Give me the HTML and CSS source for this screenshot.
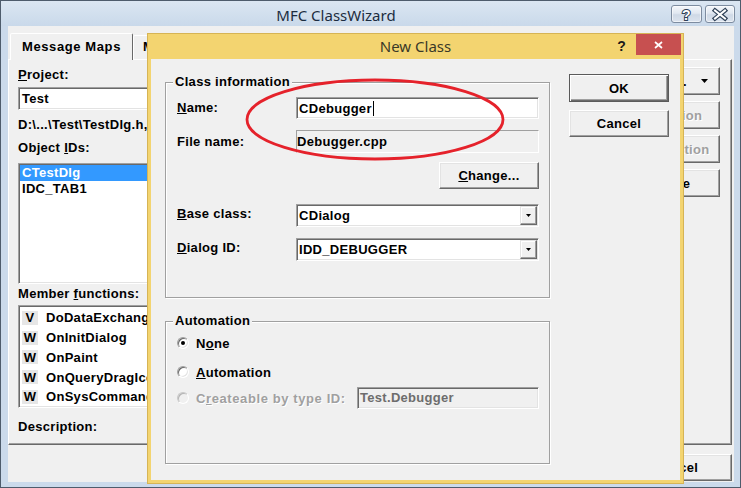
FILE: index.html
```html
<!DOCTYPE html>
<html>
<head>
<meta charset="utf-8">
<title>MFC ClassWizard</title>
<link rel="stylesheet" href="styles.css">
</head>
<body>
<div class="win">
  <div class="titlebar">
    <div class="title">MFC ClassWizard</div>
    <div class="tbtns">
      <div class="tbtn tbtn-help">
        <svg width="29" height="16" viewBox="0 0 29 16"><text x="14.5" y="13.5" text-anchor="middle" font-family="Liberation Sans, Arial, sans-serif" font-weight="700" font-size="14" fill="#ffffff" stroke="#2f4157" stroke-width="2" paint-order="stroke">?</text></svg>
      </div>
      <div class="tbtn tbtn-close">
        <svg width="28" height="16" viewBox="0 0 28 16"><path d="M9 4.5 L19 12.5 M19 4.5 L9 12.5" stroke="#2f4157" stroke-width="4.4" stroke-linecap="square" fill="none"/><path d="M9 4.5 L19 12.5 M19 4.5 L9 12.5" stroke="#ffffff" stroke-width="2" stroke-linecap="square" fill="none"/></svg>
      </div>
    </div>
  </div>
  <div class="client">
    <div class="tabs">
      <div class="tab active">Message Maps</div>
      <div class="tab">Member Variables</div>
      <div class="tab">Automation</div>
    </div>
    <div class="page">
      <div class="leftcol">
        <div class="lbl l-project"><u>P</u>roject:</div>
        <div class="sunk edit e-project">Test</div>
        <div class="lbl l-path">D:\...\Test\TestDlg.h, D:\...\Test\TestDlg.cpp</div>
        <div class="lbl l-ids">Object <u>I</u>Ds:</div>
        <div class="sunk list l-obj">
          <div class="item sel">CTestDlg</div>
          <div class="item">IDC_TAB1</div>
        </div>
        <div class="lbl l-mf">Member <u>f</u>unctions:</div>
        <div class="sunk list l-mem">
          <div class="mrow"><span class="mk">V</span>DoDataExchange</div>
          <div class="mrow"><span class="mk">W</span>OnInitDialog</div>
          <div class="mrow"><span class="mk">W</span>OnPaint</div>
          <div class="mrow"><span class="mk">W</span>OnQueryDragIcon</div>
          <div class="mrow"><span class="mk">W</span>OnSysCommand</div>
        </div>
        <div class="lbl l-desc">Description:</div>
      </div>
      <div class="rightcol">
        <div class="btn">Add Class...<svg class="arr" width="7" height="4" viewBox="0 0 7 4"><polygon points="0,0 7,0 3.5,4" fill="#000"/></svg></div>
        <div class="btn dis">Add Function</div>
        <div class="btn dis">Delete Function</div>
        <div class="btn">Edit Code</div>
      </div>
    </div>
    <div class="bottombar">
      <div class="btn">OK</div>
      <div class="btn">Cancel</div>
    </div>
  </div>
</div>

<div class="dlg">
  <div class="dtitle">
    <div class="dname">New Class</div>
    <div class="dctrls">
      <div class="dhelp">?</div>
      <div class="dclose"><svg width="9" height="8" viewBox="0 0 9 8"><path d="M1 1 L8 7 M8 1 L1 7" stroke="#ffffff" stroke-width="1.7" fill="none"/></svg></div>
    </div>
  </div>
  <div class="dclient">
    <div class="groups">
      <div class="group g-info">
        <div class="glabel">Class information</div>
        <div class="frow r-name">
          <div class="flbl"><u>N</u>ame:</div>
          <div class="sunk fld f-edit">CDebugger<span class="caret"></span></div>
        </div>
        <div class="frow r-file">
          <div class="flbl">File name:</div>
          <div class="static fld">Debugger.cpp</div>
        </div>
        <div class="frow r-change">
          <div class="btn b-change"><u>C</u>hange...</div>
        </div>
        <div class="frow r-base">
          <div class="flbl up"><u>B</u>ase class:</div>
          <div class="sunk fld combo"><span class="ctext">CDialog</span><span class="drop"><svg width="5" height="3" viewBox="0 0 5 3"><polygon points="0,0 5,0 2.5,3" fill="#000"/></svg></span></div>
        </div>
        <div class="frow r-did">
          <div class="flbl up"><u>D</u>ialog ID:</div>
          <div class="sunk fld combo"><span class="ctext">IDD_DEBUGGER</span><span class="drop"><svg width="5" height="3" viewBox="0 0 5 3"><polygon points="0,0 5,0 2.5,3" fill="#000"/></svg></span></div>
        </div>
      </div>
      <div class="group g-auto">
        <div class="glabel">Automation</div>
        <div class="rrow rr1"><span class="radio on"></span><span class="rlbl">N<u>o</u>ne</span></div>
        <div class="rrow rr2"><span class="radio"></span><span class="rlbl"><u>A</u>utomation</span></div>
        <div class="rrow rr3"><span class="radio dis"></span><span class="rlbl dis">C<u>r</u>eateable by type ID:</span><div class="sunk dedit">Test.Debugger</div></div>
      </div>
    </div>
    <div class="dbtns">
      <div class="btn def b-ok">OK</div>
      <div class="btn b-cancel">Cancel</div>
    </div>
  </div>
</div>

<svg class="ring" width="262" height="84" viewBox="0 0 262 84"><ellipse cx="130" cy="41.5" rx="128" ry="39.5" fill="none" stroke="#e5222b" stroke-width="2.8"/></svg>
</body>
</html>
```

FILE: styles.css
```css
html, body {
  margin: 0;
  padding: 0;
}
body {
  position: relative;
  width: 741px;
  height: 488px;
  overflow: hidden;
  font-family: "Liberation Sans", Arial, sans-serif;
  font-size: 13px;
  font-weight: 700;
  letter-spacing: 0.3px;
  color: #000;
  background: #cbdaeb;
}
u { text-decoration: underline; text-underline-offset: 1px; }

/* ---------- outer window ---------- */
.win {
  box-sizing: border-box;
  width: 741px;
  height: 488px;
  border: 1px solid #4e5c6c;
  background: #cbdaeb;
  display: flex;
  flex-direction: column;
}
.titlebar {
  height: 25px;
  flex: none;
  display: flex;
  align-items: flex-start;
  background: linear-gradient(#dbe6f2, #c9d9ea);
}
.title {
  flex: 1;
  text-align: center;
  font-family: "Noto Sans", "Open Sans", sans-serif;
  font-weight: 400;
  font-size: 15px;
  letter-spacing: 0;
  line-height: 20px;
  padding-top: 4px;
  color: #1c2c40;
}
.tbtns {
  display: flex;
  gap: 3px;
  margin: 4px 5px 0 0;
}
.tbtn {
  box-sizing: border-box;
  height: 18px;
  border: 1px solid #7d8ca0;
  border-radius: 3px;
  background: linear-gradient(#f4f7fb, #e1e8f1 45%, #cfd9e6 55%, #dbe3ee);
  box-shadow: inset 0 0 0 1px rgba(255,255,255,0.55);
  display: flex;
  align-items: center;
  justify-content: center;
}
.tbtn-help { width: 31px; }
.tbtn-close { width: 30px; }

.client {
  flex: 1;
  margin: 0 6px 5px 7px;
  background: #f0f0f0;
  padding-top: 7px;
  display: flex;
  flex-direction: column;
}
.tabs {
  flex: none;
  height: 26px;
  display: flex;
  align-items: flex-end;
  padding-left: 2px;
}
.tab {
  box-sizing: border-box;
  height: 24px;
  border: 1px solid;
  border-bottom: 0;
  border-color: #fff #696969 transparent #fff;
  border-radius: 2px 2px 0 0;
  background: #f0f0f0;
  padding: 0 9px;
  line-height: 22px;
  white-space: nowrap;
}
.tab.active {
  height: 27px;
  width: 123px;
  margin-bottom: -1px;
  padding: 0;
  text-align: center;
  line-height: 25px;
  letter-spacing: 0.6px;
  position: relative;
  z-index: 1;
}
.page {
  flex: none;
  box-sizing: border-box;
  height: 386px;
  margin-right: 2px;
  border: 1px solid;
  border-color: #fff #696969 #696969 #fff;
  box-shadow: inset -1px -1px 0 #a0a0a0;
  padding: 7px 11px 0 9px;
  display: flex;
  justify-content: space-between;
}
.leftcol {
  width: 420px;
  display: flex;
  flex-direction: column;
}
.lbl {
  height: 16px;
  line-height: 16px;
  white-space: nowrap;
}
.sunk {
  box-sizing: border-box;
  border: 1px solid;
  border-color: #a0a0a0 #fff #fff #a0a0a0;
  box-shadow: inset 1px 1px 0 #696969, inset -1px -1px 0 #e3e3e3;
  padding: 1px;
  background: #fff;
}
.e-project {
  margin-top: 4px;
  height: 23px;
  line-height: 19px;
  padding-left: 3px;
}
.l-path { margin-top: 7px; }
.l-ids { margin-top: 7px; }
.l-obj {
  margin-top: 7px;
  height: 121px;
}
.item {
  height: 16px;
  line-height: 16px;
  padding-left: 2px;
  white-space: nowrap;
}
.item.sel {
  background: #3399ff;
  color: #fff;
}
.l-mf { margin-top: 2px; }
.l-mem {
  margin-top: 3px;
  height: 103px;
  padding-top: 2px;
  padding-left: 3px;
}
.mrow {
  height: 19.75px;
  display: flex;
  align-items: center;
  white-space: nowrap;
}
.mk {
  width: 16px;
  height: 14px;
  background: #e6e6e6;
  display: inline-flex;
  align-items: center;
  justify-content: center;
  margin-right: 8px;
  flex: none;
}
.l-desc { margin-top: 11px; }

.rightcol {
  width: 123px;
  display: flex;
  flex-direction: column;
  gap: 6px;
}
.rightcol .btn { height: 28px; }
.arr { margin-left: 14px; }

.btn {
  box-sizing: border-box;
  display: flex;
  align-items: center;
  justify-content: center;
  background: #f0f0f0;
  border: 1px solid;
  border-color: #fff #696969 #696969 #fff;
  box-shadow: inset -1px -1px 0 #a0a0a0, inset 1px 1px 0 #e3e3e3;
  white-space: nowrap;
}
.btn.dis, .dis {
  color: #a0a0a0;
  text-shadow: 1px 1px 0 #fff;
}
.btn.def {
  border: 1px solid #5a5a5a;
  box-shadow: inset 1px 1px 0 #fff, inset -1px -1px 0 #696969, inset -2px -2px 0 #a0a0a0;
}
.bottombar {
  display: flex;
  justify-content: flex-end;
  gap: 8px;
  margin: 9px 2px 0 0;
}
.bottombar .btn {
  width: 112px;
  height: 27px;
}

/* ---------- New Class dialog ---------- */
.dlg {
  position: absolute;
  left: 147px;
  top: 33px;
  width: 537px;
  height: 451px;
  box-sizing: border-box;
  border: 1px solid #d6b455;
  background: #f3d470;
  padding: 0 3px 3px;
  display: flex;
  flex-direction: column;
}
.dtitle {
  height: 25px;
  flex: none;
  margin: 0 -3px;
  display: grid;
  grid-template-columns: 1fr auto 1fr;
  align-items: start;
}
.dname {
  grid-column: 2;
  font-family: "Noto Sans", "Open Sans", sans-serif;
  font-weight: 400;
  font-size: 15px;
  letter-spacing: 0;
  line-height: 25px;
  color: #3a3928;
}
.dctrls {
  grid-column: 3;
  justify-self: end;
  display: flex;
  align-items: flex-start;
}
.dhelp {
  font-size: 14px;
  line-height: 14px;
  margin: 5px 10px 0 0;
  color: #1a1a1a;
}
.dclose {
  width: 45px;
  height: 21px;
  background: #c75050;
  display: flex;
  align-items: center;
  justify-content: center;
  margin-right: 2px;
}
.dclient {
  flex: 1;
  background: #f0f0f0;
  display: flex;
  padding-left: 14px;
  gap: 19px;
}
.groups {
  margin-top: 23px;
  display: flex;
  flex-direction: column;
}
.group {
  box-sizing: border-box;
  width: 385px;
  border: 1px solid #a0a0a0;
  box-shadow: 1px 1px 0 #fff, inset 1px 1px 0 #fff;
  padding-left: 11px;
  display: flex;
  flex-direction: column;
  align-items: flex-start;
}
.g-info { height: 216px; }
.g-auto { height: 143px; margin-top: 23px; }
.glabel {
  margin: -8px 0 0 -4px;
  padding: 0 2px;
  height: 14px;
  line-height: 14px;
  background: #f0f0f0;
  white-space: nowrap;
}
.frow {
  width: 362px;
  display: flex;
  align-items: center;
}
.flbl {
  width: 119px;
  flex: none;
  line-height: 16px;
}
.flbl.up { margin-bottom: 4px; }
.fld {
  width: 243px;
  flex: none;
  white-space: nowrap;
}
.r-name { margin-top: 8px; height: 22px; }
.r-file { margin-top: 11px; height: 23px; }
.r-change { margin-top: 9px; height: 27px; justify-content: flex-end; }
.r-base { margin-top: 15px; height: 23px; }
.r-did { margin-top: 11px; height: 23px; }

.f-edit {
  height: 22px;
  display: flex;
  align-items: center;
  padding-left: 2px;
}
.caret {
  display: inline-block;
  width: 1px;
  height: 15px;
  background: #000;
  margin-left: 1px;
}
.static {
  box-sizing: border-box;
  height: 23px;
  border: 1px solid;
  border-color: #a0a0a0 #fff #fff #a0a0a0;
  background: #f0f0f0;
  line-height: 21px;
  padding-left: 0;
}
.b-change {
  width: 100px;
  height: 27px;
}
.combo {
  height: 23px;
  display: flex;
  align-items: center;
  justify-content: space-between;
}
.ctext { padding-left: 1px; }
.drop {
  box-sizing: border-box;
  width: 17px;
  height: 19px;
  background: #f0f0f0;
  border: 1px solid;
  border-color: #e3e3e3 #696969 #696969 #e3e3e3;
  box-shadow: inset -1px -1px 0 #a0a0a0, inset 1px 1px 0 #fff;
  display: flex;
  align-items: center;
  justify-content: center;
}

.rrow {
  width: 362px;
  display: flex;
  align-items: center;
}
.rr1 { margin-top: 7px; height: 16px; }
.rr2 { margin-top: 13px; height: 16px; }
.rr3 { margin-top: 7px; height: 22px; }
.radio {
  box-sizing: border-box;
  width: 12px;
  height: 12px;
  flex: none;
  border-radius: 50%;
  background: #fff;
  border: 1px solid;
  border-color: #a0a0a0 #fff #fff #a0a0a0;
  box-shadow: inset 1px 1px 0 #696969, inset -1px -1px 0 #e3e3e3;
  position: relative;
}
.radio.on::after {
  content: "";
  position: absolute;
  left: 3px;
  top: 3px;
  width: 4px;
  height: 4px;
  border-radius: 50%;
  background: #000;
}
.radio.dis {
  background: #f0f0f0;
  border-color: #c8c8c8 #fff #fff #c8c8c8;
  box-shadow: inset 1px 1px 0 #b4b4b4;
}
.rlbl {
  margin-left: 7px;
  white-space: nowrap;
}
.rlbl.dis { letter-spacing: 0.6px; }
.dedit {
  margin-left: auto;
  width: 182px;
  height: 22px;
  background: #f0f0f0;
  color: #6d6d6d;
  line-height: 18px;
  padding-left: 2px;
}

.dbtns {
  margin-top: 15px;
  display: flex;
  flex-direction: column;
}
.b-ok {
  width: 100px;
  height: 28px;
}
.b-cancel {
  width: 100px;
  height: 27px;
  margin-top: 8px;
}

.ring {
  position: absolute;
  left: 245px;
  top: 78px;
}
```
